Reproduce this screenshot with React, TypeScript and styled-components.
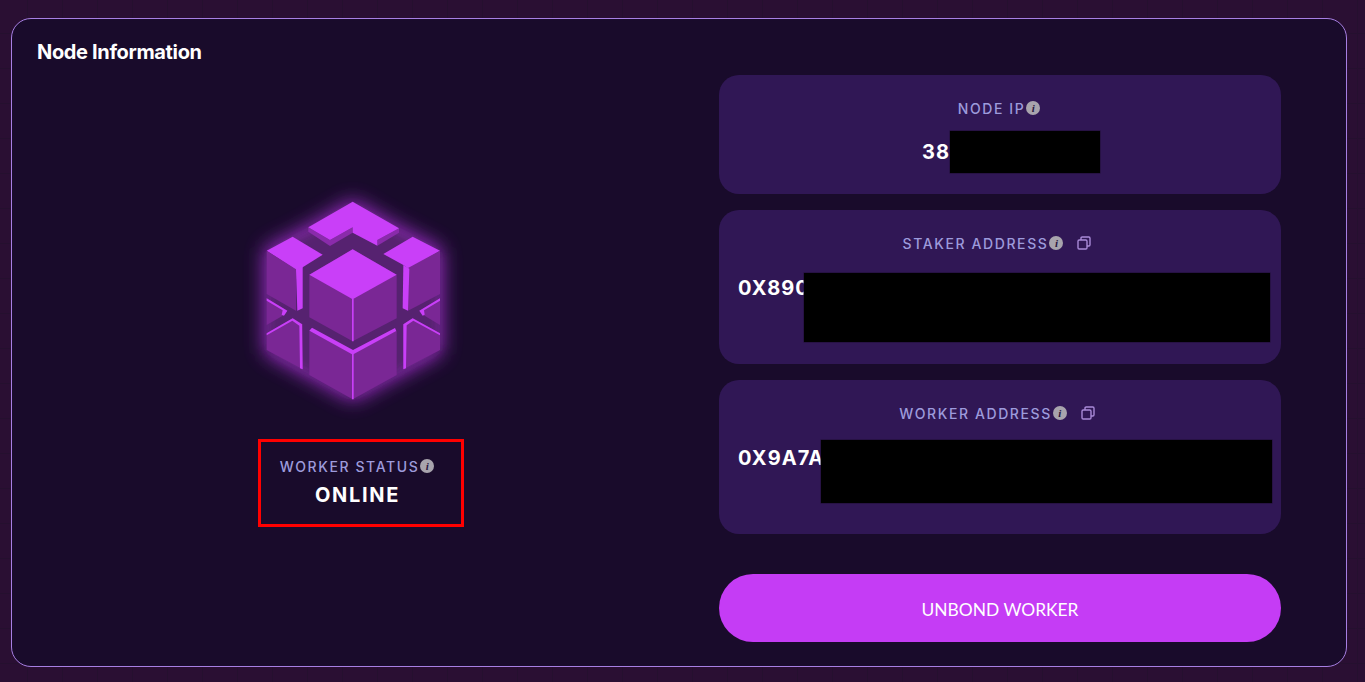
import React from "react";
import styled, { createGlobalStyle } from "styled-components";

const Global = createGlobalStyle`
  html, body { margin: 0; padding: 0; height: 100%; }
  body { background: #2a0f33; font-family: Inter, "Liberation Sans", sans-serif; }
`;

const Page = styled.div`
  box-sizing: border-box;
  width: 100%;
  height: 682px;
  overflow: hidden;
  padding: 18px 18px 15px 11px;
  background-color: #2a0f33;
  background-image:
    linear-gradient(#25102f 1px, transparent 1px),
    linear-gradient(90deg, #25102f 1px, transparent 1px);
  background-size: 35px 35px;
  background-position: 27px 33px;
`;

const Panel = styled.section`
  box-sizing: border-box;
  height: 649px;
  border: 1px solid #a77fe3;
  border-radius: 20px;
  background: #190b2b;
  padding: 21px 65px 24px 25px;
  display: flex;
  flex-direction: column;
`;

const Title = styled.h2`
  margin: 0;
  font-size: 20px;
  line-height: 24px;
  font-weight: 700;
  letter-spacing: -0.35px;
  color: #fff;
`;

const Columns = styled.div`
  display: flex;
  justify-content: space-between;
  margin-top: 11px;
  flex: 1;
`;

const Left = styled.div`
  width: 634px;
  display: flex;
  flex-direction: column;
  align-items: center;
  padding-top: 105px;
`;

const CubeLogo = styled.svg`
  display: block;
  width: 230px;
  height: 240px;
  margin-left: 2px;
  overflow: visible;
`;

const StatusBox = styled.div`
  box-sizing: border-box;
  width: 206px;
  height: 88px;
  margin-top: 19px;
  margin-left: 14px;
  border: 3px solid #f00;
  padding: 15px 8px 0 0;
  display: flex;
  flex-direction: column;
  align-items: center;
`;

const LabelRow = styled.div`
  display: flex;
  align-items: center;
  height: 18px;
  font-size: 14px;
  font-weight: 500;
  letter-spacing: 1.6px;
  color: #9d9bdc;
  white-space: nowrap;
`;

const InfoDot = styled.span`
  width: 14px;
  height: 14px;
  margin-left: 1px;
  border-radius: 50%;
  background: #a8a4ad;
  color: #2a1840;
  font: italic 700 11px/14px "Liberation Serif", serif;
  letter-spacing: 0;
  text-align: center;
`;

const CopyIcon = styled.svg`
  width: 14px;
  height: 14px;
  margin-left: 14px;
  color: #a98ad8;
`;

const StatusValue = styled.div`
  margin-top: 8px;
  margin-left: 1px;
  font-size: 20px;
  line-height: 24px;
  font-weight: 700;
  letter-spacing: 1.7px;
  color: #fff;
`;

const Right = styled.div`
  width: 562px;
  display: flex;
  flex-direction: column;
  gap: 16px;
`;

const InfoCard = styled.div<{ $h: number; $pt: number; $gap: number }>`
  box-sizing: border-box;
  height: ${(p) => p.$h}px;
  padding: ${(p) => p.$pt}px 0 0 0;
  border-radius: 20px;
  background: #301755;
  display: flex;
  flex-direction: column;
  gap: ${(p) => p.$gap}px;
`;

const LabelWrap = styled.div<{ $pr: number }>`
  display: flex;
  justify-content: center;
  padding-right: ${(p) => p.$pr}px;
`;

const ValueRow = styled.div<{ $indent: number; $textTop: number }>`
  display: flex;
  align-items: flex-start;
  padding-left: ${(p) => p.$indent}px;
  font-size: 20px;
  line-height: 24px;
  font-weight: 700;
  letter-spacing: 1.07px;
  color: #fff;
  white-space: nowrap;
  & > span:first-child {
    display: block;
    padding-top: ${(p) => p.$textTop}px;
  }
`;

const Redaction = styled.div<{ $w: number; $h: number; $overlap: number }>`
  flex: none;
  width: ${(p) => p.$w}px;
  height: ${(p) => p.$h}px;
  margin-left: ${(p) => -p.$overlap}px;
  background: #000;
  box-shadow: 0 0 0 0.5px #1f0f35;
  position: relative;
`;

const UnbondButton = styled.button`
  height: 68px;
  margin-top: 24px;
  padding: 3px 0 0;
  border: 0;
  border-radius: 34px;
  background: #c53cf5;
  color: #fff;
  font-family: Lato, sans-serif;
  font-size: 17.4px;
  font-weight: 400;
  letter-spacing: 0;
`;

const P = "#c93ff8"; // top faces and bright edges
const S = "#7a2795"; // side faces
const D = "#8a2bab"; // shaded lips

function Cube() {
  return (
    <CubeLogo viewBox="0 0 690 720" aria-hidden="true">
      <defs>
        <filter id="glow" x="-40%" y="-40%" width="180%" height="180%">
          <feGaussianBlur stdDeviation="30" />
        </filter>
        <filter id="glow2" x="-30%" y="-30%" width="160%" height="160%">
          <feGaussianBlur stdDeviation="12" />
        </filter>
      </defs>
      <path
        d="M338 60L476 140L605 207V518L338 662L74 518V207L203 140Z"
        fill="#b036de"
        opacity="0.9"
        filter="url(#glow)"
      />
      <path
        d="M338 75L470 155L595 220V510L338 650L85 510V220L210 155Z"
        fill="#56206f"
        filter="url(#glow2)"
      />
      {/* top piece */}
      <path d="M205 142L270 180V198L205 155Z" fill={D} />
      <path d="M270 180L338 142V158L270 198Z" fill={D} />
      <path d="M412 180L477 145V158L412 197Z" fill={D} />
      <path d="M338 65L477 145L412 180V197L338 158V142L270 180L205 142Z" fill={P} />
      {/* left top piece */}
      <path d="M158 170L248 224L188 262L168 270L80 212Z" fill={P} />
      <path d="M80 212L168 268V392L80 342Z" fill={S} />
      <path d="M168 268L188 258L188 385L172 392Z" fill={P} />
      {/* right top piece */}
      <path d="M518 170L600 212L508 268L490 255L430 222Z" fill={P} />
      <path d="M600 212V342L504 392V264Z" fill={S} />
      <path d="M508 266L490 255L488 385L504 392Z" fill={P} />
      {/* center */}
      <path d="M338 208L470 284V415L338 484L208 412V284Z" fill={S} />
      <path d="M338 208L470 284L338 358L208 284Z" fill={P} />
      <path d="M336 356H341V484H336Z" fill={P} />
      {/* small left wedges */}
      <path d="M80 355L142 392L132 405L80 435Z" fill={S} />
      <path d="M80 355L142 392L132 407L125 404L128 391L80 362Z" fill={P} />
      <path d="M80 460L158 415L188 433V568L80 510Z" fill={S} />
      <path d="M80 460L158 415L186 433L188 568L180 565L178 437L157 422L80 466Z" fill={P} />
      {/* small right wedges */}
      <path d="M600 355L538 392L550 405L600 435Z" fill={S} />
      <path d="M600 355L538 392L548 407L554 404L552 391L600 362Z" fill={P} />
      <path d="M600 460L518 415L490 433V568L600 510Z" fill={S} />
      <path d="M600 466L520 422L500 436L498 565L490 568L490 433L518 415L600 460Z" fill={P} />
      {/* bottom center */}
      <path d="M208 452L338 522V658L208 585Z" fill={S} />
      <path d="M470 452L338 522V658L470 585Z" fill={S} />
      <path d="M216 443L339 510L465 444L469 453L340 523L336 523L208 452Z" fill={P} />
      <path d="M336 518H341V658H336Z" fill={P} />
    </CubeLogo>
  );
}

function Copy() {
  return (
    <CopyIcon viewBox="0 0 14 14" fill="none" stroke="currentColor" strokeWidth="1.4" aria-hidden="true">
      <rect x="1" y="4" width="9" height="9" rx="1.2" />
      <path d="M4 4V2.2C4 1.5 4.5 1 5.2 1H11.8C12.5 1 13 1.5 13 2.2V8.8C13 9.5 12.5 10 11.8 10H10" />
    </CopyIcon>
  );
}

function Label({ text, copy, pr }: { text: string; copy?: boolean; pr: number }) {
  return (
    <LabelWrap $pr={pr}>
      <LabelRow>
        {text}
        <InfoDot>i</InfoDot>
        {copy && <Copy />}
      </LabelRow>
    </LabelWrap>
  );
}

export default function App() {
  return (
    <Page>
      <Global />
      <Panel>
        <Title>Node Information</Title>
        <Columns>
          <Left>
            <Cube />
            <StatusBox>
              <LabelRow>
                WORKER STATUS
                <InfoDot>i</InfoDot>
              </LabelRow>
              <StatusValue>ONLINE</StatusValue>
            </StatusBox>
          </Left>
          <Right>
            <InfoCard $h={119} $pt={24} $gap={14}>
              <Label text="NODE IP" pr={2} />
              <ValueRow $indent={203} $textTop={9}>
                <span>38.</span>
                <Redaction $w={150} $h={42} $overlap={7} />
              </ValueRow>
            </InfoCard>
            <InfoCard $h={154} $pt={24} $gap={21}>
              <Label text="STAKER ADDRESS" copy pr={6} />
              <ValueRow $indent={19} $textTop={3}>
                <span>0X890</span>
                <Redaction $w={466} $h={69} $overlap={6} />
              </ValueRow>
            </InfoCard>
            <InfoCard $h={154} $pt={24} $gap={18}>
              <Label text="WORKER ADDRESS" copy pr={6} />
              <ValueRow $indent={19} $textTop={6}>
                <span>0X9A7A</span>
                <Redaction $w={451} $h={63} $overlap={3} />
              </ValueRow>
            </InfoCard>
            <UnbondButton>UNBOND WORKER</UnbondButton>
          </Right>
        </Columns>
      </Panel>
    </Page>
  );
}
